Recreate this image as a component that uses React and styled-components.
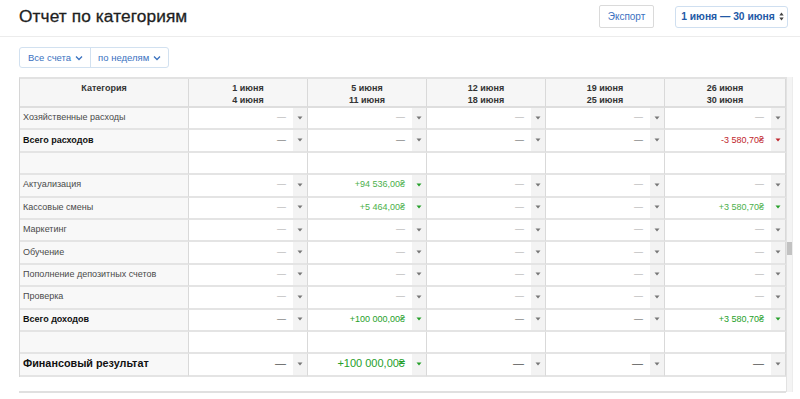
import React from "react";
import styled, { createGlobalStyle } from "styled-components";

const Global = createGlobalStyle`
  html, body { margin: 0; padding: 0; background: #fff; }
  body { font-family: "Liberation Sans", Arial, "DejaVu Sans", sans-serif; color: #333; }
  * { box-sizing: border-box; }
`;

const Page = styled.div`
  width: 800px;
  height: 399px;
  overflow: hidden;
  background: #fff;
`;

const TopBar = styled.div`
  height: 37px;
  border-bottom: 1px solid #ececec;
  display: flex;
  align-items: center;
  padding: 0 12px 3px 19px;
`;

const Title = styled.h1`
  margin: 0;
  font-size: 17.3px;
  font-weight: 400;
  color: #1e1e1e;
  flex: 1;
  letter-spacing: 0.1px;
  -webkit-text-stroke: 0.3px #1e1e1e;
`;

const ExportButton = styled.button`
  font-family: inherit;
  height: 23px;
  width: 55px;
  border: 1px solid #dadada;
  border-radius: 2px;
  background: #fff;
  color: #3b72bf;
  font-size: 10px;
  padding: 0;
  margin-right: 21px;
`;

const DateButton = styled.button`
  font-family: inherit;
  height: 22px;
  width: 113px;
  border: 1px solid #cfdff0;
  border-radius: 3px;
  background: #fff;
  color: #2259a6;
  font-size: 10.3px;
  font-weight: 700;
  display: flex;
  align-items: center;
  justify-content: center;
  gap: 4px;
  padding: 0 0 0 2px;
`;

const Filters = styled.div`
  margin: 10px 0 0 19px;
  display: inline-flex;
  height: 21px;
  border: 1px solid #d2e1f0;
  border-radius: 3px;
`;

const FilterItem = styled.div`
  display: flex;
  align-items: center;
  gap: 4px;
  padding: 0 ${p => p.$pr}px 0 ${p => p.$pl}px;
  font-size: 9.5px;
  color: #3b72bf;
  border-left: ${p => (p.$first ? "none" : "1px solid #d2e1f0")};
`;

const TableArea = styled.div`
  margin: 9px 0 0 19px;
  width: 773px;
  height: 316px;
  display: flex;
`;

const ScrollArea = styled.div`
  flex: 1;
  border-bottom: 2px solid #e0e0e0;
`;

const Grid = styled.div`
  display: grid;
  grid-template-columns: 169px repeat(4, 119px) 121px;
  border-top: 2px solid #e2e2e2;
  border-left: 1px solid #d6d6d6;
`;

const HeadCell = styled.div`
  height: 29px;
  background: #f6f6f6;
  border-right: 1px solid #d9d9d9;
  border-bottom: 2px solid #dedede;
  font-size: 9px;
  font-weight: 700;
  color: #333;
  text-align: center;
  line-height: 12px;
  padding-top: 3px;
`;

const CatCell = styled.div`
  height: 22.4px;
  background: #f8f8f8;
  border-right: 1px solid #d9d9d9;
  border-bottom: 2px solid #e4e4e4;
  display: flex;
  align-items: center;
  padding: 0 0 2px 3px;
  font-size: ${p => (p.$size === "big" ? "10.8px" : "9px")};
  font-weight: ${p => (p.$bold ? 700 : 400)};
  color: ${p => (p.$bold ? "#111" : "#4a4a4a")};
  white-space: nowrap;
`;

const ValCell = styled.div`
  height: 22.4px;
  border-right: 1px solid #d9d9d9;
  border-bottom: 2px solid #e4e4e4;
  display: flex;
  background: #fff;
`;

const Value = styled.div`
  flex: 1;
  display: flex;
  align-items: center;
  justify-content: flex-end;
  padding: 0 7px 2px 0;
  font-size: ${p => (p.$big ? "11px" : "9px")};
  color: ${p => p.$color};
  white-space: nowrap;
`;

const Caret = styled.div`
  width: 14px;
  background: #f3f3f3;
  display: flex;
  align-items: center;
  justify-content: center;
  padding-bottom: 1px;
`;

const Track = styled.div`
  width: 7px;
  height: 315px;
  background: #f4f4f4;
  border-left: 1px solid #e2e2e2;
  border-right: 1px solid #ececec;
  padding-top: 165px;
`;

const Thumb = styled.div`
  width: 5px;
  height: 13px;
  background: #c2c2c2;
`;

const CaretIcon = ({ color }) => (
  <svg width="6" height="4" viewBox="0 0 6 4">
    <polygon points="0.5,0.5 5.5,0.5 3,3.5" fill={color} />
  </svg>
);

const Chevron = () => (
  <svg width="8" height="6" viewBox="0 0 8 6">
    <polyline points="1,1.5 4,4.5 7,1.5" fill="none" stroke="#3b72bf" strokeWidth="1.3" />
  </svg>
);

const UpDown = () => (
  <svg width="5" height="9" viewBox="0 0 5 9">
    <polygon points="0.3,3.6 4.7,3.6 2.5,0.6" fill="#444" />
    <polygon points="0.3,5.4 4.7,5.4 2.5,8.4" fill="#444" />
  </svg>
);

const heads = [
  ["1 июня", "4 июня"],
  ["5 июня", "11 июня"],
  ["12 июня", "18 июня"],
  ["19 июня", "25 июня"],
  ["26 июня", "30 июня"],
];

const D = "—";
const rows = [
  { name: "Хозяйственные расходы", vals: [D, D, D, D, D] },
  { name: "Всего расходов", bold: true, vals: [D, D, D, D, "-3 580,70₴"] },
  { empty: true },
  { name: "Актуализация", vals: [D, "+94 536,00₴", D, D, D] },
  { name: "Кассовые смены", vals: [D, "+5 464,00₴", D, D, "+3 580,70₴"] },
  { name: "Маркетинг", vals: [D, D, D, D, D] },
  { name: "Обучение", vals: [D, D, D, D, D] },
  { name: "Пополнение депозитных счетов", vals: [D, D, D, D, D] },
  { name: "Проверка", vals: [D, D, D, D, D] },
  { name: "Всего доходов", bold: true, vals: [D, "+100 000,00₴", D, D, "+3 580,70₴"] },
  { empty: true },
  { name: "Финансовый результат", bold: true, big: true, vals: [D, "+100 000,00₴", D, D, D] },
];

function colorsFor(v, row) {
  if (v === D) {
    return { text: row.bold ? "#555" : "#a8a8a8", caret: "#777" };
  }
  if (v.startsWith("-")) return { text: "#c0262d", caret: "#c0262d" };
  return { text: row.bold ? "#26a02a" : "#4bb04b", caret: "#26a02a" };
}

export default function App() {
  return (
    <Page>
      <Global />
      <TopBar>
        <Title>Отчет по категориям</Title>
        <ExportButton>Экспорт</ExportButton>
        <DateButton>
          1 июня — 30 июня <UpDown />
        </DateButton>
      </TopBar>
      <Filters>
        <FilterItem $first $pl={8} $pr={7}>
          Все счета <Chevron />
        </FilterItem>
        <FilterItem $pl={7} $pr={7}>
          по неделям <Chevron />
        </FilterItem>
      </Filters>
      <TableArea>
        <ScrollArea>
          <Grid>
            <HeadCell>Категория</HeadCell>
            {heads.map((h, i) => (
              <HeadCell key={i}>
                {h[0]}
                <br />
                {h[1]}
              </HeadCell>
            ))}
            {rows.map((r, ri) => (
              <React.Fragment key={ri}>
                <CatCell $bold={r.bold} $size={r.big ? "big" : "normal"}>
                  {r.name || ""}
                </CatCell>
                {r.empty
                  ? heads.map((_, ci) => <ValCell key={ci} />)
                  : r.vals.map((v, ci) => {
                      const c = colorsFor(v, r);
                      return (
                        <ValCell key={ci}>
                          <Value $color={c.text} $big={r.big}>
                            {v}
                          </Value>
                          <Caret>
                            <CaretIcon color={c.caret} />
                          </Caret>
                        </ValCell>
                      );
                    })}
              </React.Fragment>
            ))}
          </Grid>
        </ScrollArea>
        <Track>
          <Thumb />
        </Track>
      </TableArea>
    </Page>
  );
}
